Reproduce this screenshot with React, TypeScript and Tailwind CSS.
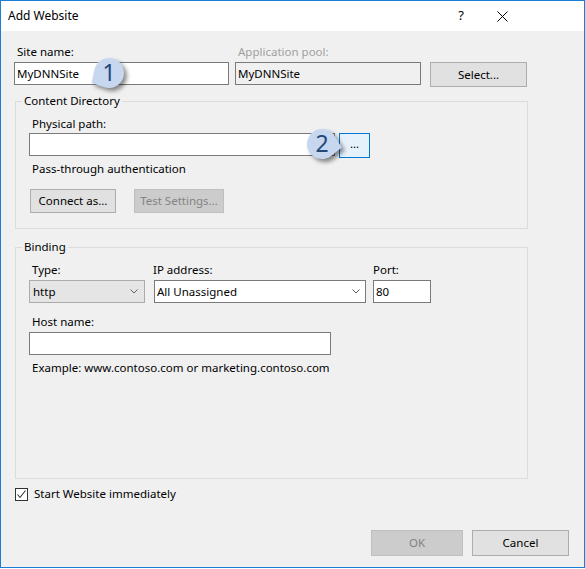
import React from "react";

const font = { fontFamily: '"Noto Sans", "Liberation Sans", sans-serif' };

function Badge({ n, left, top, angle }: { n: string; left: number; top: number; angle: number }) {
  return (
    <div className="absolute w-[60px] h-[60px]" style={{ left, top }}>
      <svg width="60" height="60" viewBox="-30 -30 60 60" className="absolute inset-0 drop-shadow-[3px_3px_2px_rgba(0,0,0,0.45)]">
        <path
          d="M20 0 L11.25 9.92 A15 15 0 1 1 11.25 -9.92 Z"
          fill="#c6d7ef"
          transform={`rotate(${angle})`}
        />
      </svg>
      <div className="absolute inset-0 flex items-center justify-center text-[23px] leading-none text-[#24477a] pb-[1px]">
        {n}
      </div>
    </div>
  );
}

function Chevron() {
  return (
    <svg width="8" height="5" viewBox="0 0 8 5">
      <path d="M0.5 0.5 L4 4 L7.5 0.5" fill="none" stroke="#606060" strokeWidth="1" />
    </svg>
  );
}

function Label({ children, dim }: { children: React.ReactNode; dim?: boolean }) {
  return (
    <div className={`h-[16px] leading-[16px] mb-[2px] pl-[3px] ${dim ? "text-[#a0a0a0]" : "text-black"}`}>
      {children}
    </div>
  );
}

export default function App() {
  return (
    <div
      className="w-[585px] h-[568px] border border-[#1a7fd4] bg-[#f0f0f0] flex flex-col text-[11.5px] text-black"
      style={font}
    >
      {/* title bar */}
      <div className="h-[30px] bg-white flex items-center pl-[7px] shrink-0">
        <span className="text-[12px]">Add Website</span>
        <span className="ml-auto text-[13px] mr-[33px]">?</span>
        <svg width="11" height="11" viewBox="0 0 11 11" className="mr-[76px]">
          <path d="M0.5 0.5 L10.5 10.5 M10.5 0.5 L0.5 10.5" stroke="#000" strokeWidth="1" />
        </svg>
      </div>

      <div className="relative flex-1 flex flex-col pl-[13px] pr-[15px]">
        {/* site name row */}
        <div className="flex mt-[13px]">
          <div className="w-[215px]">
            <Label>Site name:</Label>
            <div className="h-[23px] bg-white border border-[#7a7a7a] flex items-center pl-[2px]">MyDNNSite</div>
          </div>
          <div className="w-[186px] ml-[6px]">
            <Label dim>Application pool:</Label>
            <div className="h-[23px] bg-[#f0f0f0] border border-[#7a7a7a] flex items-center pl-[2px]">MyDNNSite</div>
          </div>
          <div className="ml-[9px] pt-[18px]">
            <div className="w-[97px] h-[25px] bg-[#e1e1e1] border border-[#adadad] flex items-center justify-center">
              Select...
            </div>
          </div>
        </div>

        {/* content directory */}
        <fieldset className="mt-[6px] ml-[1px] w-[513px] border border-[#dcdcdc]">
          <legend className="ml-[6px] px-[2px] h-[16px] leading-[16px]">Content Directory</legend>
          <div className="pl-[13px] pt-[7px] pb-[15px]">
            <Label>Physical path:</Label>
            <div className="flex items-start -mt-[1px]">
              <div className="w-[306px] h-[23px] bg-white border border-[#7a7a7a]" />
              <div className="ml-[4px] w-[31px] h-[25px] bg-[#e5f1fb] border border-[#0078d7] flex items-center justify-center leading-none pb-[3px]">
                ...
              </div>
            </div>
            <div className="mt-[3px] h-[16px] leading-[16px] pl-[3px]">Pass-through authentication</div>
            <div className="flex mt-[12px] ml-[1px]">
              <div className="w-[86px] h-[24px] bg-[#e1e1e1] border border-[#adadad] flex items-center justify-center">
                Connect as...
              </div>
              <div className="ml-[18px] w-[90px] h-[24px] bg-[#cccccc] border border-[#bfbfbf] text-[#838383] flex items-center justify-center">
                Test Settings...
              </div>
            </div>
          </div>
        </fieldset>

        {/* binding */}
        <fieldset className="mt-[10px] ml-[1px] w-[513px] h-[240px] border border-[#dcdcdc]">
          <legend className="ml-[6px] px-[2px] h-[16px] leading-[16px]">Binding</legend>
          <div className="pl-[13px] pt-[7px]">
            <div className="flex">
              <div className="w-[116px]">
                <Label>Type:</Label>
                <div className="h-[23px] bg-[#e5e5e5] border border-[#acacac] flex items-center pl-[3px] pr-[6px] justify-between">
                  <span>http</span>
                  <Chevron />
                </div>
              </div>
              <div className="w-[212px] ml-[9px]">
                <div className="h-[16px] leading-[16px] mb-[2px] -ml-[1px]">IP address:</div>
                <div className="h-[23px] bg-white border border-[#7a7a7a] flex items-center pl-[2px] pr-[5px] justify-between">
                  <span>All Unassigned</span>
                  <Chevron />
                </div>
              </div>
              <div className="w-[58px] ml-[7px]">
                <div className="h-[16px] leading-[16px] mb-[2px]">Port:</div>
                <div className="h-[23px] bg-white border border-[#7a7a7a] flex items-center pl-[2px]">80</div>
              </div>
            </div>
            <div className="mt-[11px]">
              <Label>Host name:</Label>
              <div className="w-[302px] h-[23px] bg-white border border-[#7a7a7a]" />
            </div>
            <div className="mt-[5px] h-[16px] leading-[16px] pl-[3px]">
              Example: www.contoso.com or marketing.contoso.com
            </div>
          </div>
        </fieldset>

        {/* checkbox */}
        <div className="flex items-center mt-[8px] ml-[1px] h-[14px]">
          <div className="w-[13px] h-[13px] bg-white border border-[#333333] flex items-center justify-center">
            <svg width="11" height="11" viewBox="0 0 11 11">
              <path d="M1.5 5.5 L4 8.5 L9.5 1.5" fill="none" stroke="#333" strokeWidth="1.1" />
            </svg>
          </div>
          <span className="ml-[6px]">Start Website immediately</span>
        </div>

        {/* buttons */}
        <div className="flex justify-end mt-[29px]">
          <div className="w-[92px] h-[26px] bg-[#cccccc] border border-[#bfbfbf] text-[#838383] flex items-center justify-center">
            OK
          </div>
          <div className="ml-[9px] w-[97px] h-[26px] bg-[#e1e1e1] border border-[#adadad] flex items-center justify-center">
            Cancel
          </div>
        </div>

        <Badge n="1" left={78} top={12} angle={150} />
        <Badge n="2" left={291} top={83} angle={10} />
      </div>
    </div>
  );
}
